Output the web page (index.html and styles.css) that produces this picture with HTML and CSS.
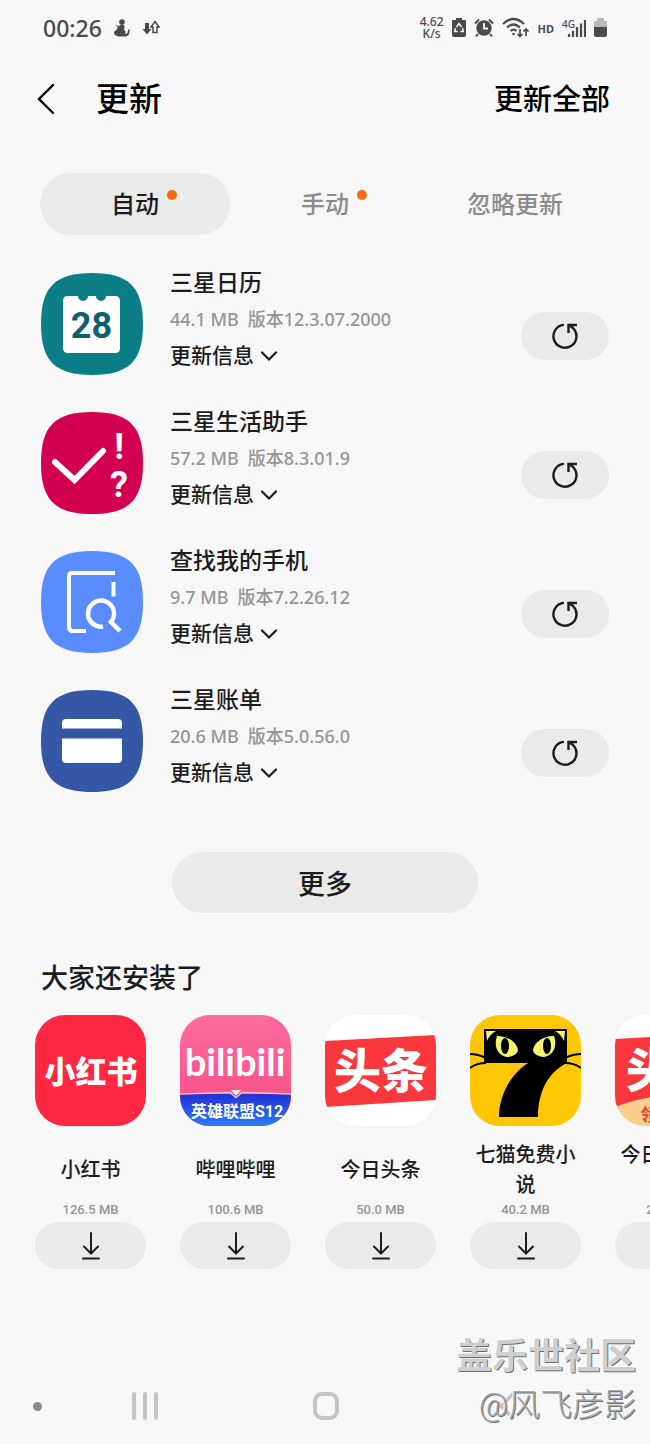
FILE: index.html
```html
<!DOCTYPE html>
<html lang="zh-CN">
<head>
    <meta charset="UTF-8">
    <meta name="viewport" content="width=device-width, initial-scale=1.0">
    <title>更新</title>
    <link rel="stylesheet" href="styles.css">
</head>
<body>
<svg class="defs" aria-hidden="true">
    <defs>
        <symbol id="chevron" viewBox="0 0 18 12"><path d="M2 2.500l7 7 7-7" fill="none" stroke="currentColor" stroke-width="2.200" stroke-linecap="round"/></symbol>
        <symbol id="refresh" viewBox="0 0 28 28"><path d="M12 2.900A11.500 11.500 0 1 0 22 6L18 3" fill="none" stroke="currentColor" stroke-width="2.400" stroke-linecap="round"/><path d="M17.500 11V3H26" fill="none" stroke="currentColor" stroke-width="2.400"/></symbol>
        <symbol id="download" viewBox="0 0 20 28"><path d="M10 1v20M3 14.500l7 7 7-7M2 26.500h16" fill="none" stroke="currentColor" stroke-width="2" stroke-linecap="round"/></symbol>
        <clipPath id="squircle"><path d="M51 0C88 0 102 14 102 51S88 102 51 102 0 88 0 51 14 0 51 0z"/></clipPath>
    </defs>
</svg>
<div class="screen">
    <div class="status-bar">
        <span class="time">00:26</span>
        <svg width="16" height="18" viewBox="0 0 16 18" fill="currentColor"><circle cx="8" cy="3" r="2.800"/><path d="M1 6l4 1 3-2c4 1 2 5 2 6 2 1 2 3 1 4 2 0 3-1 3-4l1.500-1c.5 5-1 7-4 7.500H5C1 17 0 15 0 13l3-3 1-2z"/></svg>
        <svg class="arrows" width="18" height="16" viewBox="0 0 18 16"><path d="M3 3h4v6h2.500L5 14.500.5 9H3z" fill="currentColor"/><path d="M11 12.500V7H9l4-5.500L17 7h-2v5.500z" fill="none" stroke="currentColor" stroke-width="1.500"/></svg>
        <div class="status-right">
            <div class="speed"><span>4.62</span><span>K/s</span></div>
            <svg width="14" height="20" viewBox="0 0 14 20"><path d="M4 0h6v2h3q1 0 1 1v14q0 2-2 2H2q-2 0-2-2V3q0-1 1-1h3z" fill="currentColor"/><path d="M4.500 9L7 5.500 9.500 9M3.500 10L2.700 13.500h3M10.500 10l.8 3.500h-3" fill="none" stroke="#f7f7f7" stroke-width="1.500"/></svg>
            <svg width="20" height="20" viewBox="0 0 20 20"><circle cx="10" cy="10" r="7.700" fill="currentColor"/><path d="M1 5.500L5 1.500M15 1.500l4 4M4 16l-2 2.500M16 16l2 2.500" stroke="currentColor" stroke-width="2"/><path d="M10 5v5.500h4" fill="none" stroke="#f7f7f7" stroke-width="1.800"/></svg>
            <svg width="28" height="22" viewBox="0 0 28 22" fill="none" stroke="currentColor" stroke-width="2.200"><path d="M1 7Q11.500-3 22 7M5 10.500q6.500-6 13 0M8.500 14q3-2.700 6 0"/><circle cx="11.500" cy="17" r="1.300" fill="currentColor" stroke="none"/><path d="M18 12v7M15.500 17l2.500 2.500 2.500-2.500M24 19v-7M21.500 14.500L24 12l2.500 2.500" stroke-width="1.700"/></svg>
            <span class="hd">HD</span>
            <div class="signal">
                <span>4G</span>
                <svg width="19" height="18" viewBox="0 0 19 18" stroke="currentColor" stroke-width="2.200"><path d="M2 15v3M6 12v6M10 8v10M14 4.500V18M18 1v17"/></svg>
            </div>
            <svg width="13" height="20" viewBox="0 0 13 20"><path d="M3 0h7v3h2q1 0 1 1v5H0V4q0-1 1-1h2z" fill="#b8b8b8"/><path d="M0 9h13v8q0 2-2 2H2q-2 0-2-2z" fill="currentColor"/></svg>
        </div>
    </div>

    <header class="header">
        <button class="back" aria-label="返回"><svg width="18" height="32" viewBox="0 0 18 32"><path d="M16 2L2 16l14 14" fill="none" stroke="currentColor" stroke-width="2.400" stroke-linecap="round"/></svg></button>
        <h1>更新</h1>
        <button class="update-all">更新全部</button>
    </header>

    <nav class="tabs">
        <button class="tab active">自动<i class="dot"></i></button>
        <button class="tab">手动<i class="dot"></i></button>
        <button class="tab">忽略更新</button>
    </nav>

    <main>
        <ul class="updates">
            <li class="update">
                <svg class="app-icon" viewBox="0 0 102 102"><g clip-path="url(#squircle)"><path d="M0 0h102v102H0z" fill="#0c7e87"/></g><path d="M27 23h10a5 5 0 0 0 10 0h8a5 5 0 0 0 10 0h9q5 0 5 5v47q0 5-5 5H27q-5 0-5-5V28q0-5 5-5z" fill="#fff"/><text x="50.500" y="65" class="day">28</text></svg>
                <div class="info">
                    <h2>三星日历</h2>
                    <p class="meta"><span>44.1 MB</span><span>版本12.3.07.2000</span></p>
                    <button class="details">更新信息<svg width="18" height="12"><use href="#chevron"/></svg></button>
                </div>
                <button class="refresh" aria-label="更新"><svg width="28" height="28"><use href="#refresh"/></svg></button>
            </li>
            <li class="update">
                <svg class="app-icon" viewBox="0 0 102 102"><g clip-path="url(#squircle)"><path d="M0 0h102v102H0z" fill="#d30052"/></g><path d="M14 50l19.500 18L62 39" fill="none" stroke="#fff" stroke-width="6" stroke-linecap="round"/><text x="78" y="47" class="mark">!</text><text x="78" y="85" class="mark">?</text></svg>
                <div class="info">
                    <h2>三星生活助手</h2>
                    <p class="meta"><span>57.2 MB</span><span>版本8.3.01.9</span></p>
                    <button class="details">更新信息<svg width="18" height="12"><use href="#chevron"/></svg></button>
                </div>
                <button class="refresh" aria-label="更新"><svg width="28" height="28"><use href="#refresh"/></svg></button>
            </li>
            <li class="update">
                <svg class="app-icon" viewBox="0 0 102 102"><g clip-path="url(#squircle)"><path d="M0 0h102v102H0z" fill="#598cff"/></g><g fill="none" stroke="#fff" stroke-width="4"><path d="M74 22H31q-3 0-3 3v51q0 4 4 4h13M72.500 31v14.500"/><path d="M62 75.500A13 13 0 1 1 70 71l9 9" stroke-width="4.500"/></g></svg>
                <div class="info">
                    <h2>查找我的手机</h2>
                    <p class="meta"><span>9.7 MB</span><span>版本7.2.26.12</span></p>
                    <button class="details">更新信息<svg width="18" height="12"><use href="#chevron"/></svg></button>
                </div>
                <button class="refresh" aria-label="更新"><svg width="28" height="28"><use href="#refresh"/></svg></button>
            </li>
            <li class="update">
                <svg class="app-icon" viewBox="0 0 102 102"><g clip-path="url(#squircle)"><path d="M0 0h102v102H0z" fill="#3457a6"/></g><path d="M21 38.500V33q0-4 4-4h52q4 0 4 4v5.500zM21 48.500h60V69q0 4-4 4H25q-4 0-4-4z" fill="#fff"/></svg>
                <div class="info">
                    <h2>三星账单</h2>
                    <p class="meta"><span>20.6 MB</span><span>版本5.0.56.0</span></p>
                    <button class="details">更新信息<svg width="18" height="12"><use href="#chevron"/></svg></button>
                </div>
                <button class="refresh" aria-label="更新"><svg width="28" height="28"><use href="#refresh"/></svg></button>
            </li>
        </ul>

        <button class="more">更多</button>

        <section class="also">
            <h2>大家还安装了</h2>
            <div class="cards">
                <article class="card">
                    <svg class="logo" viewBox="0 0 111 111"><path d="M0 0h111v111H0z" fill="#ff2742"/><text x="56" y="68" class="logo-red">小红书</text></svg>
                    <h3>小红书</h3>
                    <p>126.5 MB</p>
                    <button class="download" aria-label="下载小红书"><svg width="20" height="28"><use href="#download"/></svg></button>
                </article>
                <article class="card">
                    <svg class="logo" viewBox="0 0 111 111">
                        <defs>
                            <linearGradient id="pink" x2="0" y2="1"><stop offset="0" stop-color="#ff6b9f"/><stop offset="1" stop-color="#f74c83"/></linearGradient>
                            <linearGradient id="blue" x2="0" y2="1"><stop offset="0" stop-color="#2430d8"/><stop offset="1" stop-color="#2b7cf5"/></linearGradient>
                        </defs>
                        <path d="M0 0h111v111H0z" fill="url(#pink)"/>
                        <path d="M0 79h111v32H0z" fill="url(#blue)"/>
                        <path d="M0 79l50-1.500 6 5 6-5L111 79" fill="none" stroke="#ffc0b8" stroke-width="1.500"/>
                        <path d="M51 75h10l-5 6z" fill="#fff0d8"/>
                        <text x="55" y="61" class="logo-bili">bilibili</text>
                        <text x="43" y="102" class="logo-lol">英雄联盟</text>
                        <text x="89" y="102" class="logo-lol">S12</text>
                    </svg>
                    <h3>哔哩哔哩</h3>
                    <p>100.6 MB</p>
                    <button class="download" aria-label="下载哔哩哔哩"><svg width="20" height="28"><use href="#download"/></svg></button>
                </article>
                <article class="card">
                    <svg class="logo" viewBox="0 0 111 111"><path d="M0 0h111v111H0z" fill="#fff"/><path d="M0 26l111-6v65L0 92z" fill="#fb373e"/><text x="56" y="73" class="logo-news">头条</text></svg>
                    <h3>今日头条</h3>
                    <p>50.0 MB</p>
                    <button class="download" aria-label="下载今日头条"><svg width="20" height="28"><use href="#download"/></svg></button>
                </article>
                <article class="card">
                    <svg class="logo" viewBox="0 0 111 111">
                        <path d="M0 0h111v111H0z" fill="#fdc704"/>
                        <path d="M14 14h83v34C78 57 68 77 68 102H29c0-22 12-43 29-54H14z"/>
                        <path d="M0 39q8 0 16 4M0 53q6-5 16-5M111 39q-8 0-16 4M111 53q-6-5-16-5" fill="none" stroke="#000" stroke-width="2"/>
                        <path d="M16 16h10q-6 3-9 10zM95 16H85q6 3 9 10z" fill="#f6f26b"/>
                        <path d="M27 21c12 0 20 7 21 14 0 4-6 7-11 7-8-1-14-9-10-21zM84 21c-12 0-20 7-21 14 0 4 6 7 11 7 8-1 14-9 10-21z" fill="#f6f26b"/>
                        <ellipse cx="35" cy="31" rx="4" ry="8"/><ellipse cx="77" cy="31" rx="4" ry="8"/>
                    </svg>
                    <h3>七猫免费小说</h3>
                    <p>40.2 MB</p>
                    <button class="download" aria-label="下载七猫免费小说"><svg width="20" height="28"><use href="#download"/></svg></button>
                </article>
                <article class="card">
                    <svg class="logo" viewBox="0 0 111 111"><path d="M0 0h111v111H0z" fill="#fff"/><path d="M0 24l111-6v75H0z" fill="#fb373e"/><text x="58" y="72" class="logo-news">头条</text><path d="M0 92q55-22 111 0v19H0z" fill="#f8cf8c"/><text x="51" y="106" class="logo-gift">领现金</text></svg>
                    <h3>今日头条极速版</h3>
                    <p>28.4 MB</p>
                    <button class="download" aria-label="下载今日头条极速版"><svg width="20" height="28"><use href="#download"/></svg></button>
                </article>
            </div>
        </section>
    </main>

    <footer class="nav-bar">
        <i class="nav-dot"></i>
        <button aria-label="最近"><svg width="26" height="28" viewBox="0 0 26 28"><path d="M2 2v24M13 2v24M24 2v24" stroke="currentColor" stroke-width="4" stroke-linecap="round"/></svg></button>
        <button aria-label="主页"><svg width="28" height="28" viewBox="0 0 28 28"><rect x="3" y="2" width="22" height="24" rx="7" fill="none" stroke="currentColor" stroke-width="4"/></svg></button>
        <button aria-label="返回"><svg width="16" height="28" viewBox="0 0 16 28"><path d="M14 2L2 14l12 12" fill="none" stroke="currentColor" stroke-width="3.500" stroke-linecap="round"/></svg></button>
    </footer>
    <div class="watermark">
        <strong>盖乐世社区</strong>
        <span>@风飞彦影</span>
    </div>
</div>
</body>
</html>
```
FILE: styles.css
```css
* {
    box-sizing: border-box;
}

body {
    margin: 0;
    background: #f7f7f7;
    color: #1c1c1c;
    font-family: Roboto, "Noto Sans CJK SC", sans-serif;
    font-weight: 500;
}

h1, h2, h3, p, ul {
    margin: 0;
    padding: 0;
    font-weight: 500;
}

button {
    border: none;
    padding: 0;
    background: none;
    color: inherit;
    font: inherit;
    cursor: pointer;
}

svg {
    display: block;
    flex: none;
}

.defs {
    position: absolute;
    width: 0;
    height: 0;
}

.screen {
    position: relative;
    min-height: 100vh;
    display: flex;
    flex-direction: column;
    overflow: hidden;
}

main {
    flex: 1;
}

/* status bar */
.status-bar {
    display: flex;
    align-items: center;
    height: 56px;
    padding: 0 43px;
    color: #4a4a4a;
    font-family: "Noto Sans", sans-serif;
}

.time {
    font-size: 23px;
    margin-right: 12px;
}

.arrows {
    margin-left: 12px;
}

.status-right {
    display: flex;
    align-items: center;
    gap: 8px;
    margin-left: auto;
}

.speed {
    display: flex;
    flex-direction: column;
    align-items: center;
    font-size: 12px;
    line-height: 12px;
}

.hd {
    font-size: 11px;
    font-weight: 700;
}

.signal {
    display: flex;
    align-items: flex-end;
}

.signal span {
    font-size: 10px;
    line-height: 10px;
    align-self: flex-start;
    margin-right: -8px;
}

/* title bar */
.header {
    display: flex;
    align-items: center;
    height: 85px;
    padding: 0 40px 0 37px;
    color: #000;
}

.header h1 {
    font-size: 33px;
    margin-left: 41px;
    padding-bottom: 4px;
}

.update-all {
    margin-left: auto;
    padding-bottom: 4px;
    font-size: 29px;
}

/* tabs */
.tabs {
    display: grid;
    grid-template-columns: repeat(3, 1fr);
    margin: 32px 40px 0;
}

.tab {
    position: relative;
    height: 62px;
    padding-bottom: 3px;
    border-radius: 31px;
    color: #8b8b8b;
    font-size: 24px;
}

.tab.active {
    background: #eaeaea;
    color: #1c1c1c;
}

.dot {
    position: absolute;
    top: 17px;
    left: calc(50% + 32px);
    width: 10px;
    height: 10px;
    border-radius: 50%;
    background: #f26a10;
}

/* update list */
.updates {
    display: flex;
    flex-direction: column;
    gap: 35px;
    margin: 37px 41px 0;
    list-style: none;
}

.update {
    display: flex;
    align-items: center;
    height: 104px;
}

.app-icon {
    width: 102px;
    height: 102px;
}

.day {
    fill: #0f5f70;
    font-size: 36px;
    font-weight: 700;
    text-anchor: middle;
}

.mark {
    fill: #fff;
    font-size: 36px;
    font-weight: 700;
    text-anchor: middle;
}

.info {
    flex: 1;
    margin-left: 27px;
    padding-bottom: 6px;
}

.info h2 {
    font-size: 23px;
    line-height: 32px;
}

.meta {
    display: flex;
    gap: 9px;
    color: #959595;
    font-family: "Noto Sans", "Noto Sans CJK SC", sans-serif;
    font-size: 18px;
    line-height: 38px;
}

.details {
    display: flex;
    align-items: center;
    gap: 6px;
    font-size: 21px;
    line-height: 36px;
}

.refresh {
    display: flex;
    align-items: center;
    justify-content: center;
    width: 88px;
    height: 48px;
    margin-top: 24px;
    border-radius: 24px;
    background: #eaeaea;
}

.more {
    display: block;
    width: 47%;
    height: 61px;
    margin: 59px auto 0;
    border-radius: 31px;
    background: #eaeaea;
    font-size: 27px;
}

/* recommendations */
.also {
    margin-top: 46px;
}

.also h2 {
    margin-left: 41px;
    font-size: 27px;
    line-height: 40px;
}

.cards {
    display: flex;
    gap: 34px;
    margin-top: 16px;
    padding-left: 35px;
    overflow: hidden;
}

.card {
    flex: none;
    width: 111px;
    text-align: center;
}

.logo {
    width: 111px;
    height: 111px;
    border-radius: 30px;
    text-anchor: middle;
}

.card h3 {
    display: flex;
    align-items: center;
    justify-content: center;
    height: 60px;
    margin-top: 14px;
    font-size: 20px;
    line-height: 30px;
}

.card p {
    color: #959595;
    font-size: 13px;
    line-height: 20px;
}

.download {
    display: flex;
    align-items: center;
    justify-content: center;
    width: 100%;
    height: 47px;
    margin-top: 2px;
    border-radius: 24px;
    background: #eaeaea;
}

.logo-red {
    fill: #fff;
    font-size: 31px;
    font-weight: 900;
}

.logo-bili {
    fill: #fff;
    font-family: Lato, sans-serif;
    font-size: 38px;
    font-weight: 700;
}

.logo-lol {
    fill: #fff;
    font-size: 16px;
    font-weight: 700;
}

.logo-news {
    fill: #fff;
    font-size: 47px;
    font-weight: 900;
}

.logo-gift {
    fill: #e0492f;
    font-size: 17px;
    font-weight: 700;
}

/* system navigation */
.nav-bar {
    display: flex;
    align-items: center;
    height: 76px;
    padding: 0 53px 0 33px;
    color: #c4c4c4;
}

.nav-bar button {
    display: flex;
    flex: 1;
    justify-content: center;
}

.nav-dot {
    width: 9px;
    height: 9px;
    margin-right: 12px;
    border-radius: 50%;
    background: #8a8a8a;
}

.watermark {
    position: absolute;
    right: 14px;
    bottom: 16px;
    display: flex;
    flex-direction: column;
    align-items: flex-end;
    color: #cfcfcf;
    text-shadow: 1px 1px 0 #707070, -1px -1px 0 #fff;
}

.watermark strong {
    font-size: 36px;
    font-weight: 700;
    line-height: 50px;
}

.watermark span {
    color: #a8a8a8;
    font-size: 32px;
    font-weight: 300;
    line-height: 46px;
}
```
